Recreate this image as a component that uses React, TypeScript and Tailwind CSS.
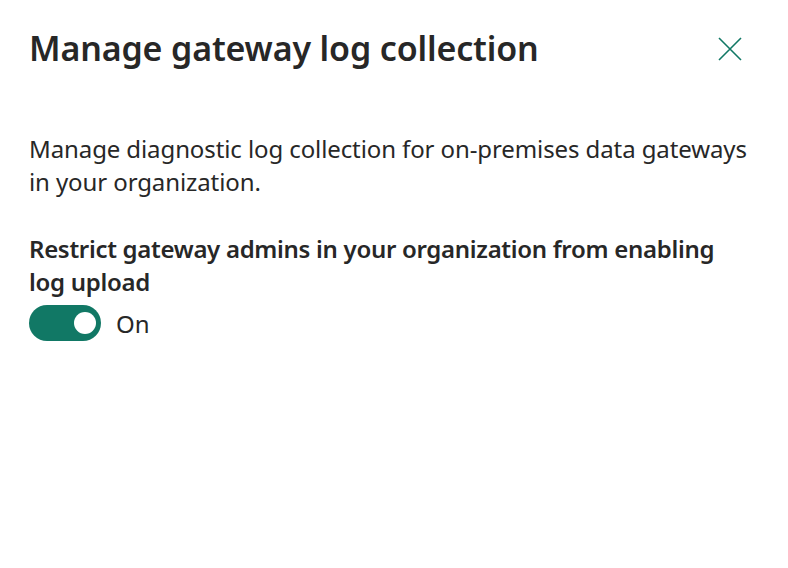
import React, { useState } from 'react';

export default function App() {
    const [on, setOn] = useState(true);

    return (
        <div className="w-[788px] h-[568px] bg-white text-[#272727]" style={{ fontFamily: '"Noto Sans", "Open Sans", sans-serif' }}>
            <div className="flex items-start justify-between pl-[29px] pr-[46px] pt-[24px]">
                <h1 className="text-[34px] leading-[48px] font-semibold tracking-[-0.15px]">Manage gateway log collection</h1>
                <button className="mt-[13px] w-[24px] h-[24px] flex items-center justify-center text-[#117865]">
                    <svg width="24" height="24" viewBox="0 0 24 24" fill="none" stroke="currentColor" strokeWidth="1.6">
                        <path d="M1 1L23 23M23 1L1 23" />
                    </svg>
                </button>
            </div>

            <div className="pl-[29px] pr-[30px] pt-[60px]">
                <p className="text-[24px] leading-[33px] tracking-[-0.1px]">
                    Manage diagnostic log collection for on-premises data gateways in your organization.
                </p>

                <div className="mt-[34px] max-w-[700px] text-[24px] leading-[33px] font-semibold tracking-[-0.3px]">
                    Restrict gateway admins in your organization from enabling log upload
                </div>

                <div className="flex items-center gap-[15px] mt-[7px]">
                    <button
                        onClick={() => setOn(!on)}
                        className={`w-[72px] h-[36px] rounded-full flex items-center px-[5px] ${on ? 'bg-[#117865] justify-end' : 'bg-white border border-gray-500 justify-start'}`}
                    >
                        <span className={`w-[22px] h-[22px] rounded-full ${on ? 'bg-white' : 'bg-gray-600'}`} />
                    </button>
                    <span className="text-[24px] leading-[33px]">{on ? 'On' : 'Off'}</span>
                </div>
            </div>
        </div>
    );
}
